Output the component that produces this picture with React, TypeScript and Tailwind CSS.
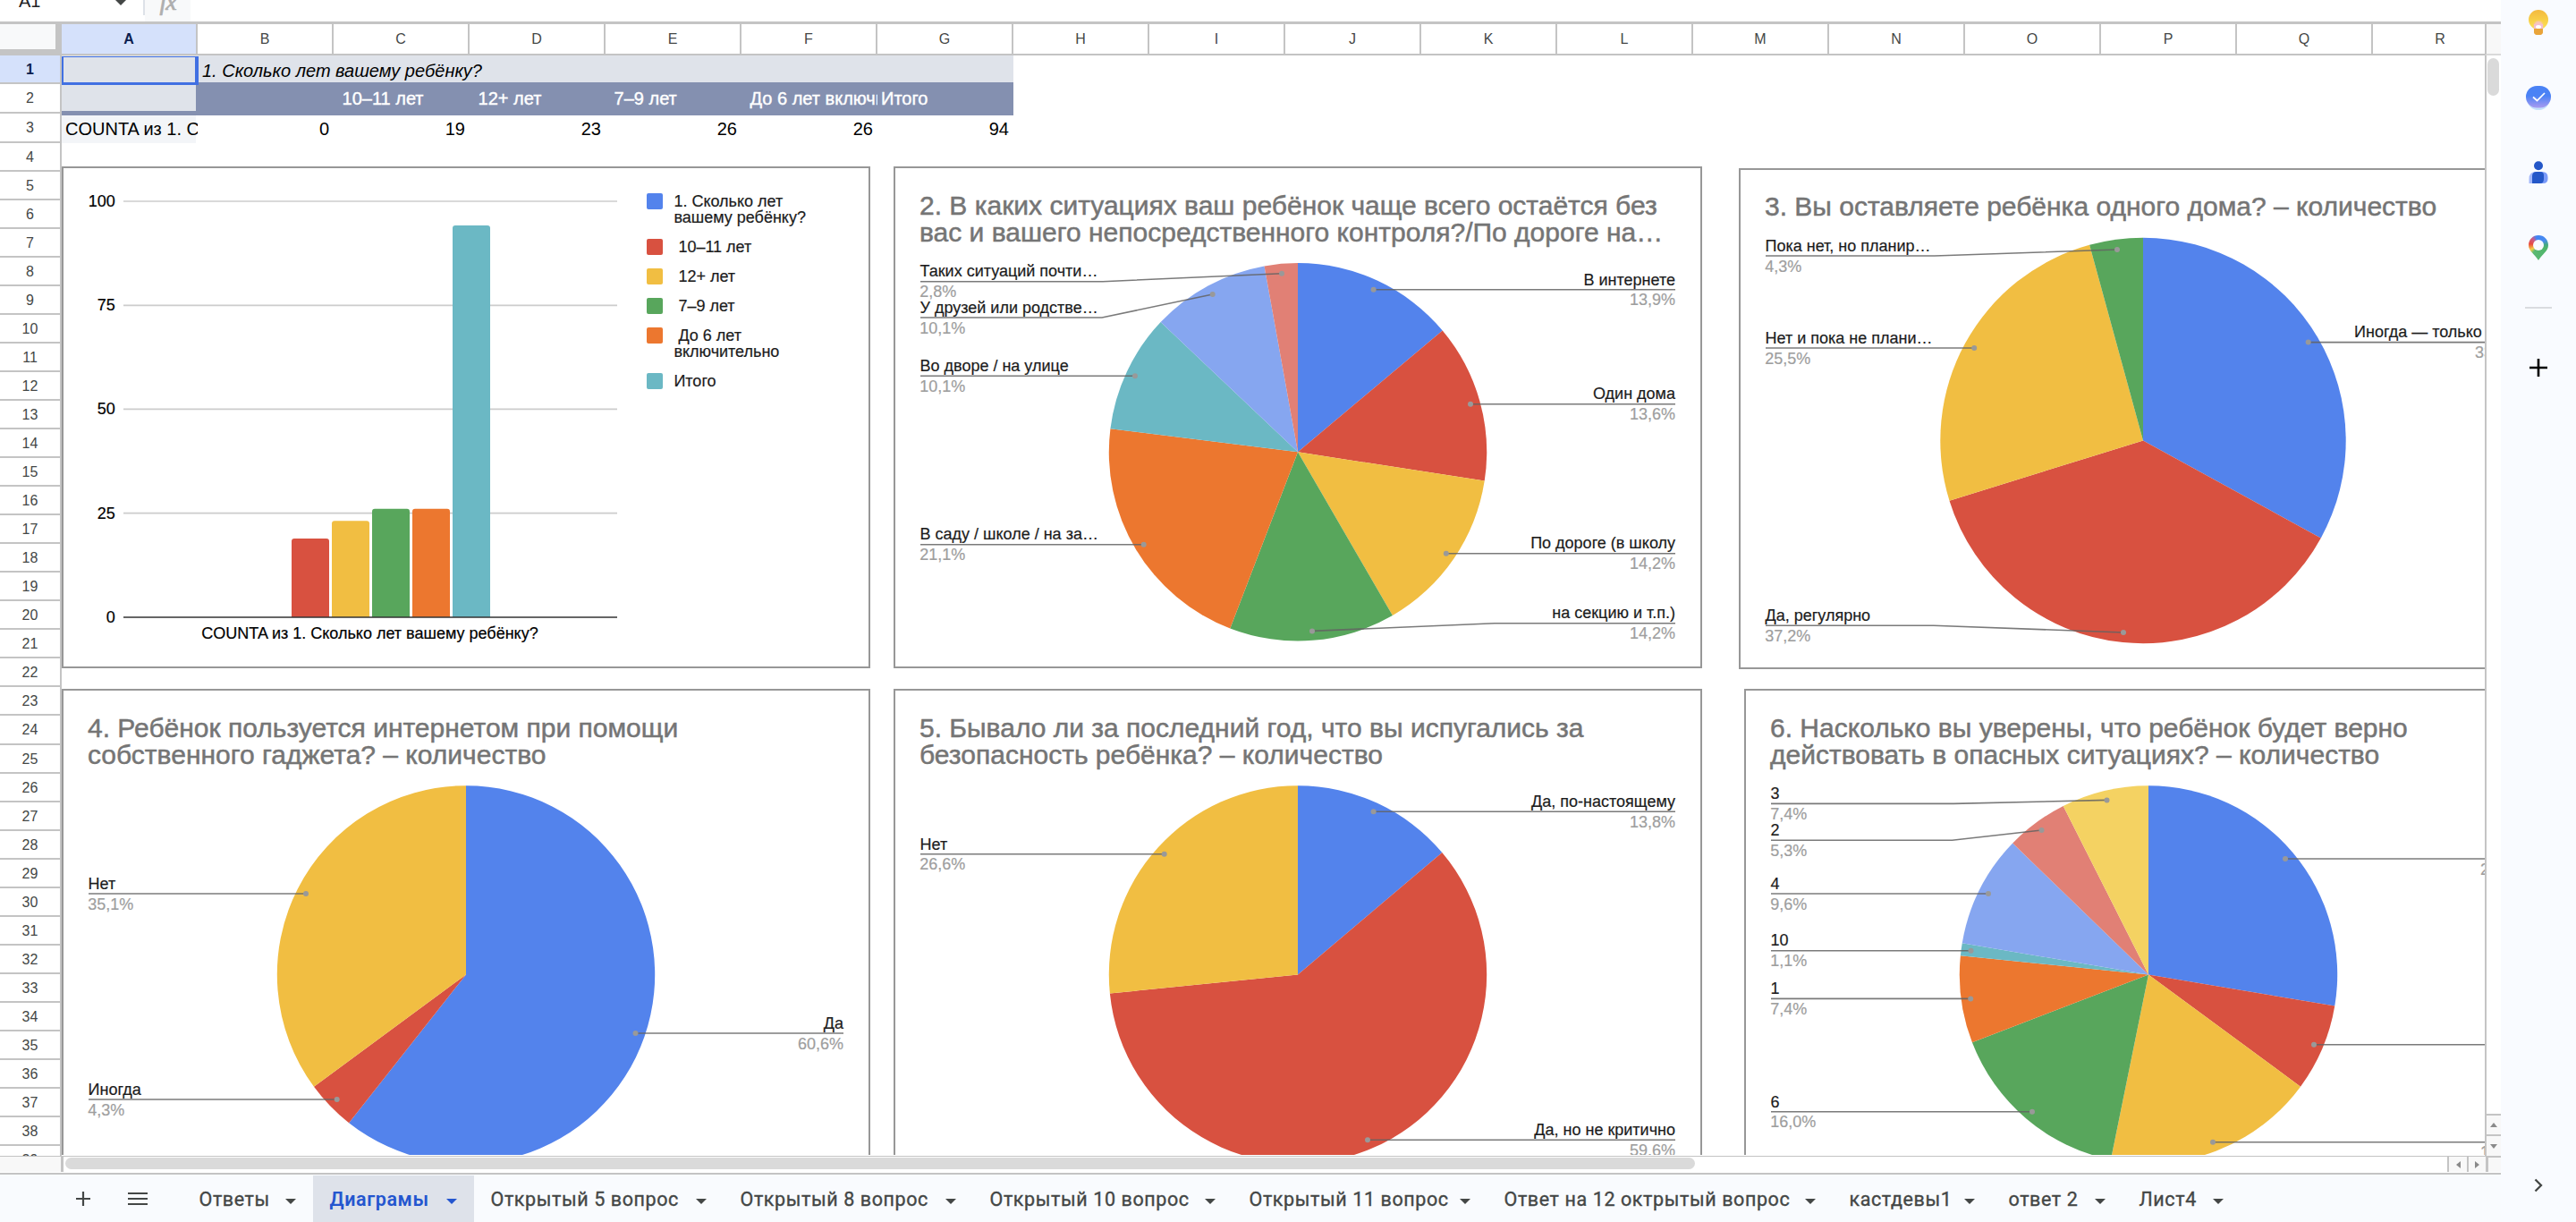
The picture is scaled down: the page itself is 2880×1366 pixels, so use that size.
import React from "react";

const BLUE = "#5383ec";
const RED = "#d85140";
const YELLOW = "#f1be42";
const GREEN = "#58a65c";
const ORANGE = "#ec772f";
const TEAL = "#6bb8c4";
const LIGHT_BLUE = "#86a6f0";
const LIGHT_RED = "#e18075";
const LIGHT_YELLOW = "#f4d262";

/* ---------- Charts ---------- */

type Callout = {
  side: "l" | "r";
  y: number;
  dot: number;
  dotY?: number;
  bend?: number;
  label?: string;
  labelX?: number;
  pct: string;
};

type Pie = {
  frame: string;
  box: [number, number, number, number];
  title: string[];
  titleX: number;
  titleY: number[];
  cx: number;
  cy: number;
  r: number;
  slices: [number, string][];
  left: number;
  right: number;
  callouts: Callout[];
};

const pies: Pie[] = [
  {
    frame: "absolute left-[930px] top-[124px] h-[561px] w-[904px]",
    box: [999, 186, 904, 561],
    title: [
      "2. В каких ситуациях ваш ребёнок чаще всего остаётся без",
      "вас и вашего непосредственного контроля?/По дороге на…",
    ],
    titleX: 1028,
    titleY: [240, 270],
    cx: 1451,
    cy: 505.3,
    r: 211.2,
    slices: [[44, BLUE], [43, RED], [45, YELLOW], [45, GREEN], [67, ORANGE], [32, TEAL], [32, LIGHT_BLUE], [9, LIGHT_RED]],
    left: 1029,
    right: 1873,
    callouts: [
      { side: "l", y: 314.7, bend: 1233, dot: 1433, dotY: 305.7, label: "Таких ситуаций почти…", pct: "2,8%" },
      { side: "l", y: 355, bend: 1232, dot: 1355.7, dotY: 329, label: "У друзей или родстве…", pct: "10,1%" },
      { side: "l", y: 420.2, dot: 1269, label: "Во дворе / на улице", pct: "10,1%" },
      { side: "l", y: 608.7, dot: 1278.7, label: "В саду / школе / на за…", pct: "21,1%" },
      { side: "r", y: 323.8, dot: 1535.6, label: "В интернете", pct: "13,9%" },
      { side: "r", y: 451.7, dot: 1644, label: "Один дома", pct: "13,6%" },
      { side: "r", y: 618.7, dot: 1616.8, label: "По дороге (в школу", pct: "14,2%" },
      { side: "r", y: 696.7, bend: 1671, dot: 1467, dotY: 705.4, label: "на секцию и т.п.)", pct: "14,2%" },
    ],
  },
  {
    frame: "absolute left-[1875px] top-[126px] h-[560px] w-[904px]",
    box: [1944, 188, 904, 560],
    title: ["3. Вы оставляете ребёнка одного дома? – количество"],
    titleX: 1973,
    titleY: [241],
    cx: 2396,
    cy: 492.5,
    r: 226.7,
    slices: [[31, BLUE], [35, RED], [24, YELLOW], [4, GREEN]],
    left: 1974,
    right: 2818,
    callouts: [
      { side: "l", y: 286, bend: 2163, dot: 2367, dotY: 279, label: "Пока нет, но планир…", pct: "4,3%" },
      { side: "l", y: 389, dot: 2207.2, label: "Нет и пока не плани…", pct: "25,5%" },
      { side: "l", y: 699.2, bend: 2162, dot: 2374, dotY: 707, label: "Да, регулярно", pct: "37,2%" },
      { side: "r", y: 382.6, dot: 2580.7, label: "Иногда — только", labelX: 2632, pct: "33,0%" },
    ],
  },
  {
    frame: "absolute left-0 top-[708px] h-[561px] w-[904px]",
    box: [69, 770, 904, 561],
    title: ["4. Ребёнок пользуется интернетом при помощи", "собственного гаджета? – количество"],
    titleX: 98,
    titleY: [824, 854],
    cx: 521,
    cy: 1089.4,
    r: 211.2,
    slices: [[57, BLUE], [4, RED], [33, YELLOW]],
    left: 99,
    right: 943,
    callouts: [
      { side: "l", y: 999, dot: 342, label: "Нет", pct: "35,1%" },
      { side: "l", y: 1229, dot: 376.7, label: "Иногда", pct: "4,3%" },
      { side: "r", y: 1155, dot: 710.5, label: "Да", pct: "60,6%" },
    ],
  },
  {
    frame: "absolute left-[930px] top-[708px] h-[561px] w-[904px]",
    box: [999, 770, 904, 561],
    title: ["5. Бывало ли за последний год, что вы испугались за", "безопасность ребёнка? – количество"],
    titleX: 1028,
    titleY: [824, 854],
    cx: 1451,
    cy: 1089.4,
    r: 211.2,
    slices: [[13, BLUE], [56, RED], [25, YELLOW]],
    left: 1029,
    right: 1873,
    callouts: [
      { side: "l", y: 954.8, dot: 1301.7, label: "Нет", pct: "26,6%" },
      { side: "r", y: 907.3, dot: 1535.6, label: "Да, по-настоящему", pct: "13,8%" },
      { side: "r", y: 1274.2, dot: 1529, label: "Да, но не критично", pct: "59,6%" },
    ],
  },
  {
    frame: "absolute left-[1881px] top-[708px] h-[561px] w-[904px]",
    box: [1950, 770, 904, 561],
    title: ["6. Насколько вы уверены, что ребёнок будет верно", "действовать в опасных ситуациях? – количество"],
    titleX: 1979,
    titleY: [824, 854],
    cx: 2402,
    cy: 1089.4,
    r: 211.2,
    slices: [
      [26, BLUE],
      [7, RED],
      [17, YELLOW],
      [15, GREEN],
      [7, ORANGE],
      [1, TEAL],
      [9, LIGHT_BLUE],
      [5, LIGHT_RED],
      [7, LIGHT_YELLOW],
    ],
    left: 1980,
    right: 2824,
    callouts: [
      { side: "l", y: 898.4, bend: 2184, dot: 2355.5, dotY: 894.4, label: "3", pct: "7,4%" },
      { side: "l", y: 939.2, bend: 2182.5, dot: 2282.5, dotY: 928, label: "2", pct: "5,3%" },
      { side: "l", y: 999, dot: 2223, label: "4", pct: "9,6%" },
      { side: "l", y: 1062.7, dot: 2203.5, label: "10", pct: "1,1%" },
      { side: "l", y: 1116.4, dot: 2203.2, label: "1", pct: "7,4%" },
      { side: "l", y: 1242.8, dot: 2272, label: "6", pct: "16,0%" },
      { side: "r", y: 960, dot: 2555, pct: "27,7%" },
      { side: "r", y: 1167.8, dot: 2587, pct: "7,4%" },
      { side: "r", y: 1276.8, dot: 2474, pct: "18,1%" },
    ],
  },
];

function slicePaths(p: Pie) {
  const total = p.slices.reduce((s, [v]) => s + v, 0);
  let acc = 0;
  return p.slices.map(([v, color], i) => {
    const a0 = (acc / total) * Math.PI * 2;
    acc += v;
    const a1 = (acc / total) * Math.PI * 2;
    const pt = (a: number) => `${p.cx + p.r * Math.sin(a)} ${p.cy - p.r * Math.cos(a)}`;
    const large = a1 - a0 > Math.PI ? 1 : 0;
    return <path key={i} d={`M${p.cx} ${p.cy}L${pt(a0)}A${p.r} ${p.r} 0 ${large} 1 ${pt(a1)}Z`} fill={color} />;
  });
}

function PieChart({ p }: { p: Pie }) {
  return (
    <div className={p.frame}>
      <svg viewBox={p.box.join(" ")} className="block h-full w-full bg-white" fontFamily="'Liberation Sans', Arial, sans-serif">
        <rect
          x={p.box[0] + 1}
          y={p.box[1] + 1}
          width={p.box[2] - 2}
          height={p.box[3] - 2}
          fill="none"
          stroke="#979797"
          strokeWidth={2}
        />
        {p.title.map((t, i) => (
          <text key={i} x={p.titleX} y={p.titleY[i]} fontSize={30} fill="#757575" stroke="#757575" strokeWidth={0.5}>
            {t}
          </text>
        ))}
        {slicePaths(p)}
        {p.callouts.map((c, i) => {
          const edge = c.side === "l" ? p.left : p.right;
          const dotY = c.dotY ?? c.y;
          const anchor = c.side === "l" ? "start" : "end";
          return (
            <g key={i} fontSize={18}>
              <polyline
                points={`${edge},${c.y} ${c.bend ?? c.dot},${c.y} ${c.dot},${dotY}`}
                fill="none"
                stroke="#636363"
                strokeOpacity={0.85}
                strokeWidth={1.6}
              />
              <circle cx={c.dot} cy={dotY} r={3} fill="#999999" />
              {c.label && (
                <text
                  x={c.labelX ?? (c.side === "l" ? edge - 0.5 : edge)}
                  y={c.y - 5.3}
                  textAnchor={c.labelX ? "start" : anchor}
                  fill="#1c1c1c"
                  stroke="#1c1c1c"
                  strokeWidth={0.2}
                >
                  {c.label}
                </text>
              )}
              <text
                x={c.side === "l" ? edge - 0.8 : edge}
                y={c.y + 17.5}
                textAnchor={anchor}
                fill="#9e9e9e"
                stroke="#9e9e9e"
                strokeWidth={0.2}
              >
                {c.pct}
              </text>
            </g>
          );
        })}
      </svg>
    </div>
  );
}

const bars: [number, number, string][] = [
  [326, 602, RED],
  [371, 582.2, YELLOW],
  [416, 568.8, GREEN],
  [461, 568.8, ORANGE],
  [506, 252, TEAL],
];

const legend: [number, string, string[]][] = [
  [216, BLUE, ["1. Сколько лет", "вашему ребёнку?"]],
  [267, RED, ["\u00a010–11 лет"]],
  [300, YELLOW, ["\u00a012+ лет"]],
  [333, GREEN, ["\u00a07–9 лет"]],
  [366, ORANGE, ["\u00a0До 6 лет", "включительно"]],
  [417, TEAL, ["Итого"]],
];

function BarChart() {
  const grid: [number, string][] = [
    [225, "100"],
    [341.3, "75"],
    [457.4, "50"],
    [573.6, "25"],
    [690, "0"],
  ];
  return (
    <div className="absolute left-0 top-[124px] h-[561px] w-[904px]">
      <svg viewBox="69 186 904 561" className="block h-full w-full bg-white" fontFamily="'Liberation Sans', Arial, sans-serif" fontSize={18}>
        <rect x={70} y={187} width={902} height={559} fill="none" stroke="#979797" strokeWidth={2} />
        {grid.map(([y, t]) => (
          <g key={t}>
            {t !== "0" && <line x1={138} x2={690} y1={y} y2={y} stroke="#cccccc" strokeWidth={1.7} />}
            <text x={128.8} y={y + 6} textAnchor="end" fill="#000000" stroke="#000000" strokeWidth={0.2}>
              {t}
            </text>
          </g>
        ))}
        {bars.map(([x, y, c]) => (
          <path key={x} d={`M${x} 690V${y + 3}Q${x} ${y} ${x + 3} ${y}H${x + 39}Q${x + 42} ${y} ${x + 42} ${y + 3}V690Z`} fill={c} />
        ))}
        <line x1={138} x2={690} y1={690} y2={690} stroke="#333333" strokeWidth={1.7} />
        <text x={413.5} y={714} textAnchor="middle" fill="#000000" stroke="#000000" strokeWidth={0.2}>
          COUNTA из 1. Сколько лет вашему ребёнку?
        </text>
        {legend.map(([y, c, lines]) => (
          <g key={y}>
            <rect x={723} y={y} width={18} height={18} rx={2} fill={c} />
            {lines.map((l, i) => (
              <text key={l} x={753.4} y={y + 15.3 + i * 18} fill="#1c1c1c" stroke="#1c1c1c" strokeWidth={0.2}>
                {l}
              </text>
            ))}
          </g>
        ))}
      </svg>
    </div>
  );
}

/* ---------- Sheet ---------- */

const columns = "ABCDEFGHIJKLMNOPQR".split("");
const rows = Array.from({ length: 39 }, (_, i) => i + 1);

function FormulaBar() {
  return (
    <div className="flex h-[27px] shrink-0 items-start overflow-hidden border-b-[3px] border-[#c4c4c4] bg-white">
      <div className="flex h-[17px] w-[162px] items-start justify-between border-r-2 border-[#dde1e8] pl-[21px] pr-[19px]">
        <span className="-mt-[10px] text-[20px] leading-[22px] text-[#202124]">A1</span>
        <svg className="h-[6px] w-[12px]" viewBox="0 0 12 6">
          <path d="M0 0H12L6 6Z" fill="#444746" />
        </svg>
      </div>
      <div className="flex h-[24px] w-[51px] items-start justify-center bg-[#f8f9fa]">
        <span className="-mt-[13px] font-['Liberation_Serif',serif] text-[28px] italic leading-[30px] tracking-[-1px] text-[#aeaeae] [-webkit-text-stroke:0.7px_#aeaeae]">
          fx
        </span>
      </div>
    </div>
  );
}

function ColumnHeader() {
  return (
    <div className="flex h-[35px] shrink-0">
      <div className="h-[35px] w-[69px] shrink-0 bg-[#c4c4c4]">
        <div className="h-[28px] w-[62px] bg-[#f8f9fa]" />
      </div>
      <div className="flex w-[2709px] shrink-0 overflow-hidden border-b-2 border-[#c4c4c4]">
        {columns.map((c, i) => (
          <div
            key={c}
            className={
              "flex w-[152px] shrink-0 items-center justify-center border-r-2 border-[#c4c4c4] pt-px text-[16px] " +
              (i === 0 ? "bg-[#d5e1fb] font-bold text-[#0b1d4f]" : "bg-white text-[#444746]")
            }
          >
            {c}
          </div>
        ))}
      </div>
      <div className="w-[18px] border-b-2 border-l-2 border-b-[#d9d9d9] border-l-[#c4c4c4] bg-[#f8f8f8]" />
    </div>
  );
}

function RowGutter() {
  return (
    <div className="h-[1230px] w-[69px] shrink-0 overflow-hidden border-r-2 border-[#c4c4c4]">
      {rows.map((r) => (
        <div
          key={r}
          className={
            "flex items-center justify-center border-b-2 border-[#c4c4c4] pt-px text-[16px] " +
            (r === 2 || r === 3 || r === 24 ? "h-[33px] " : "h-[32px] ") +
            (r === 1 ? "bg-[#d5e1fb] font-bold text-[#0b1d4f]" : "bg-white text-[#444746]")
          }
        >
          {r}
        </div>
      ))}
    </div>
  );
}

function Cells() {
  return (
    <div className="text-[20px] leading-[24px] text-black">
      <div className="flex h-[30px] w-[1064px] bg-[#dfe3ea] pl-[157px] pt-[5px] italic">1. Сколько лет вашему ребёнку?</div>
      <div className="flex h-[37px] w-[1064px] bg-[#8490b0] text-white [-webkit-text-stroke:0.4px_#fff]">
        <div className="flex w-[150px] flex-col pt-[3px]">
          <div className="h-[29px] bg-[#dfe3ea]" />
        </div>
        <div className="w-[154px]" />
        {["\u00a010–11 лет", "\u00a012+ лет", "\u00a07–9 лет", "\u00a0До 6 лет включительно", "Итого"].map((t) => (
          <div key={t} className="w-[152px] shrink-0 overflow-hidden whitespace-nowrap pl-[4px] pt-[6px]">
            {t}
          </div>
        ))}
      </div>
      <div className="flex h-[31px] w-[1064px]">
        <div className="w-[152px] shrink-0 overflow-hidden whitespace-nowrap bg-[linear-gradient(to_right,#f3f5f8_150px,#fff_150px)] pl-[4px] pt-[3px]">
          COUNTA из 1. Сколько
        </div>
        {["0", "19", "23", "26", "26", "94"].map((t, i) => (
          <div key={i} className="w-[152px] shrink-0 pr-[5px] pt-[3px] text-right">
            {t}
          </div>
        ))}
      </div>
    </div>
  );
}

function VerticalScroll() {
  return (
    <div className="flex w-[18px] flex-col border-l-2 border-[#c4c4c4] bg-white">
      <div className="ml-px mt-[3px] h-[42px] w-[13px] rounded-full bg-[#dadada]" />
      <div className="mt-auto flex h-[23px] items-center justify-center border-t-2 border-[#c4c4c4] bg-[#f8f8f8]">
        <svg className="h-[5px] w-[8px]" viewBox="0 0 8 5">
          <path d="M4 0L8 5H0Z" fill="#8a8a8a" />
        </svg>
      </div>
      <div className="flex h-[24px] items-center justify-center border-t-2 border-[#c4c4c4] bg-[#f8f8f8]">
        <svg className="h-[5px] w-[8px]" viewBox="0 0 8 5">
          <path d="M0 0H8L4 5Z" fill="#8a8a8a" />
        </svg>
      </div>
    </div>
  );
}

function HorizontalScroll() {
  return (
    <div className="flex h-[21px] shrink-0 border-b-2 border-[#c4c4c4] bg-white pb-px">
      <div className="w-[71px] shrink-0 border-r-[3px] border-t border-[#c4c4c4] bg-[#f8f8f8]" />
      <div className="w-[2665px] shrink-0 border-t border-[#c4c4c4] pl-[2px] pt-px">
        <div className="h-[13px] w-[1822px] rounded-full bg-[#dadada]" />
      </div>
      <div className="flex w-[22px] items-center justify-center border-l-2 border-t border-[#c4c4c4] bg-[#f8f8f8]">
        <svg className="h-[8px] w-[5px]" viewBox="0 0 5 8">
          <path d="M5 0V8L0 4Z" fill="#8a8a8a" />
        </svg>
      </div>
      <div className="flex w-[21px] items-center justify-center border-l-2 border-t border-[#c4c4c4] bg-[#f8f8f8]">
        <svg className="h-[8px] w-[5px]" viewBox="0 0 5 8">
          <path d="M0 0V8L5 4Z" fill="#8a8a8a" />
        </svg>
      </div>
      <div className="flex-1 border-l-[3px] border-t-2 border-[#c4c4c4] bg-[#f8f8f8]" />
    </div>
  );
}

const tabs: [string, string][] = [
  ["Ответы", "w-[146px]"],
  ["Диаграмы", "w-[180px]"],
  ["Открытый 5 вопрос", "w-[279px]"],
  ["Открытый 8 вопрос", "w-[279px]"],
  ["Открытый 10 вопрос", "w-[290px]"],
  ["Открытый 11 вопрос", "w-[285px]"],
  ["Ответ на 12 октрытый вопрос", "w-[386px]"],
  ["кастдевы1", "w-[178px]"],
  ["ответ 2", "w-[146px]"],
  ["Лист4", "w-[132px]"],
];

function SheetTabs() {
  return (
    <div className="flex h-[53px] shrink-0 items-stretch bg-[#f9fbfe] pt-px font-['Roboto',sans-serif] text-[21.5px] tracking-[0.6px] text-[#444746]">
      <div className="flex w-[204px] shrink-0 items-center">
        <svg className="ml-[85px] h-[16px] w-[16px]" viewBox="0 0 16 16">
          <path d="M8 0V16M0 8H16" stroke="#444746" strokeWidth={2.2} />
        </svg>
        <svg className="ml-[42px] h-[16px] w-[22px]" viewBox="0 0 22 16">
          <path d="M0 2H22M0 8H22M0 14H22" stroke="#444746" strokeWidth={2.2} />
        </svg>
      </div>
      {tabs.map(([t, w]) => {
        const active = t === "Диаграмы";
        return (
          <div
            key={t}
            className={
              "flex shrink-0 items-center justify-between whitespace-nowrap pl-[18.5px] pr-[19px] pt-[3px] " +
              w +
              (active
                ? " bg-[#dee2ea] font-semibold text-[#2456cf]"
                : " [-webkit-text-stroke:0.35px_#444746]")
            }
          >
            <span>{t}</span>
            <svg className="mt-[3px] h-[6px] w-[12px] shrink-0" viewBox="0 0 12 6">
              <path d="M0 0H12L6 6Z" fill="currentColor" />
            </svg>
          </div>
        );
      })}
    </div>
  );
}

/* ---------- Side panel ---------- */

function SidePanel() {
  return (
    <aside className="flex w-[84px] flex-col items-center bg-[#f9fbff]">
      <svg className="mt-[11px] h-[28px] w-[22px] shrink-0" viewBox="0 0 22 28">
        <defs>
          <linearGradient id="keep" x1="0" y1="0" x2="0" y2="1">
            <stop offset="0" stopColor="#f3b93f" />
            <stop offset="1" stopColor="#fce34f" />
          </linearGradient>
          <radialGradient id="glow" cx="0.5" cy="0.8" r="0.32">
            <stop offset="0" stopColor="#f6c3dc" />
            <stop offset="0.6" stopColor="#f7c6b0" />
            <stop offset="1" stopColor="#f8d555" stopOpacity="0" />
          </radialGradient>
        </defs>
        <rect x={6} y={17} width={10} height={11} rx={4} fill="#e9a43a" />
        <circle cx={11} cy={11} r={11} fill="url(#keep)" />
        <circle cx={11} cy={11} r={11} fill="url(#glow)" />
        <path d="M6 21V16H16V21Z" fill="#f3bfd0" />
        <ellipse cx={11} cy={19} rx={3} ry={2} fill="#ffffff" />
        <path d="M6 21H16V24Q16 28 12 28H10Q6 28 6 24Z" fill="#e9a43a" />
      </svg>
      <svg className="mt-[57px] h-[27px] w-[28px] shrink-0" viewBox="0 0 28 27">
        <defs>
          <linearGradient id="tasks" x1="0" y1="0" x2="0" y2="1">
            <stop offset="0.45" stopColor="#4a82f5" />
            <stop offset="1" stopColor="#a99bf0" />
          </linearGradient>
        </defs>
        <ellipse cx={14} cy={15.5} rx={12.5} ry={11.5} fill="#c4e1fb" />
        <rect x={0} y={0} width={28} height={24.5} rx={12.2} fill="url(#tasks)" />
        <path d="M8 12.5L12.5 16.5L21 8" fill="none" stroke="#ffffff" strokeWidth={1.7} />
      </svg>
      <svg className="mt-[57px] h-[25px] w-[22px] shrink-0" viewBox="0 0 22 25">
        <path d="M0.5 25V20Q0.5 12 8 12H12V25Z" fill="#a3b8fb" />
        <path d="M10 12H15Q21.5 12 21.5 18V20Q21.5 25 16 25H10Z" fill="#7b9bf8" />
        <path d="M4 25V17Q4 12 9 12H13Q17 12 17 16V20Q17 25 13 25Z" fill="#2457c8" />
        <circle cx={11} cy={5.3} r={5} fill="#2457c8" />
      </svg>
      <div className="relative mt-[58px] h-[28px] w-[22px] shrink-0">
        <div className="h-full w-full bg-[conic-gradient(from_0deg_at_50%_40%,#4285f4_0deg,#4a8cf0_50deg,#46a884_85deg,#4fb56a_110deg,#5bb974_215deg,#f7d046_240deg,#f0903f_258deg,#ea4a3f_280deg,#c85c8a_320deg,#4285f4_345deg)] [clip-path:path('M11_0C17.2_0_22_4.8_22_11C22_18_15.5_20.5_11_28C6.5_20.5_0_18_0_11C0_4.8_4.8_0_11_0Z')]" />
        <div className="absolute left-[5px] top-[5px] h-[12px] w-[12px] rounded-full bg-[#f9fbff]" />
      </div>
      <div className="mt-[52px] h-[2px] w-[30px] shrink-0 bg-[#dadce0]" />
      <svg className="mt-[56px] h-[20px] w-[20px] shrink-0" viewBox="0 0 20 20">
        <path d="M10 0V20M0 10H20" stroke="#000000" strokeWidth={2.6} />
      </svg>
      <svg className="mb-[33px] mt-auto h-[16px] w-[10px] shrink-0" viewBox="0 0 10 16">
        <path d="M1.5 1.5L8 8L1.5 14.5" fill="none" stroke="#444746" strokeWidth={2.3} />
      </svg>
    </aside>
  );
}

export default function App() {
  return (
    <div className="flex h-[1366px] w-[2880px] overflow-hidden bg-white font-['Liberation_Sans',Arial,sans-serif]">
      <main className="flex w-[2796px] shrink-0 flex-col">
        <FormulaBar />
        <ColumnHeader />
        <div className="flex h-[1230px] shrink-0">
          <RowGutter />
          <div className="relative h-[1229px] w-[2709px] shrink-0 overflow-hidden bg-white">
            <Cells />
            <div className="absolute left-0 top-px h-[32px] w-[153px] border-b-[3px] border-l-2 border-r-[4px] border-t border-[#4170e2]" />
            <BarChart />
            {pies.map((p, i) => (
              <PieChart key={i} p={p} />
            ))}
          </div>
          <VerticalScroll />
        </div>
        <HorizontalScroll />
        <SheetTabs />
      </main>
      <SidePanel />
    </div>
  );
}
